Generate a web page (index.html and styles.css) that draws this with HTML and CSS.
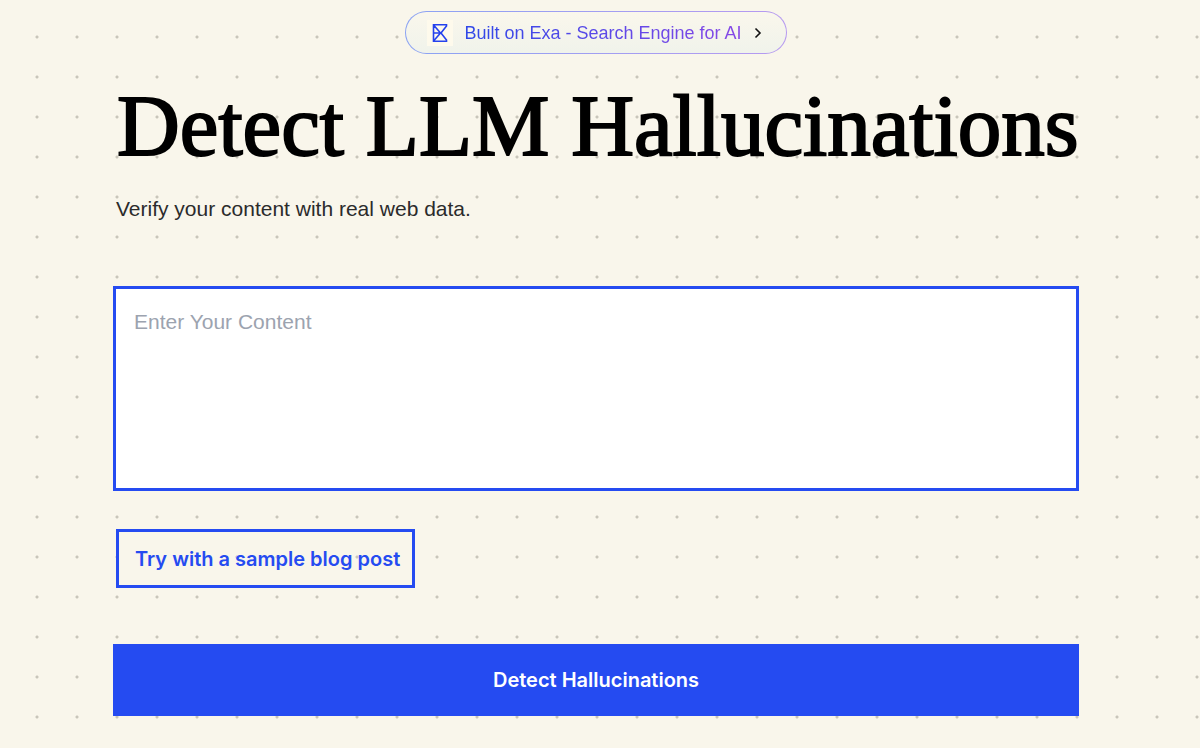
FILE: index.html
```html
<!DOCTYPE html>
<html lang="en">
<head>
<meta charset="utf-8">
<meta name="viewport" content="width=device-width, initial-scale=1">
<title>Detect LLM Hallucinations</title>
<link rel="stylesheet" href="styles.css">
</head>
<body>
<main class="page">
  <a class="badge" href="#">
    <svg class="badge-logo" viewBox="0 0 26 26" aria-hidden="true">
      <rect width="26" height="26" fill="#fefaec"/>
      <path d="M6.500 4.800H19.500V6L14 13L19.500 20V21.200H6.500zM7 5.500L13.500 13L7 20.500M6.500 13H13.500" fill="none" stroke="#2542ee" stroke-width="1.600"/>
    </svg>
    <span class="badge-text">Built on Exa - Search Engine for AI</span>
    <svg class="badge-arrow" viewBox="0 0 8 12" aria-hidden="true">
      <path d="M1.500 1.500L6 6L1.500 10.500" fill="none" stroke="#111" stroke-width="1.600"/>
    </svg>
  </a>
  <h1 class="title">Detect LLM Hallucinations</h1>
  <p class="subtitle">Verify your content with real web data.</p>
  <form class="form">
    <textarea class="content" aria-label="Your content" placeholder="Enter Your Content"></textarea>
    <button class="sample" type="button">Try with a sample blog post</button>
    <button class="submit" type="button">Detect Hallucinations</button>
  </form>
</main>
</body>
</html>
```
FILE: styles.css
```css
* {
  box-sizing: border-box;
}

body {
  margin: 0;
  min-height: 100vh;
  background-color: #f9f6eb;
  background-image: radial-gradient(circle at 50% 50%, #c9c6bb 1px, transparent 2px);
  background-size: 40px 40px;
  background-position: 17px 17px;
  font-family: "Liberation Sans", sans-serif;
  color: #2b2b2b;
}

.page {
  display: flex;
  flex-direction: column;
  max-width: 966px;
  margin: 0 121px 0 113px;
  padding: 11px 0 32px;
}

.badge {
  display: flex;
  align-items: center;
  align-self: center;
  height: 43px;
  padding: 0 24px 0 21px;
  border: 1px solid transparent;
  border-radius: 22px;
  background:
    linear-gradient(#faf7ec, #f0f3eb) padding-box,
    linear-gradient(90deg, #8ba3f3, #b79af0) border-box;
  text-decoration: none;
}

.badge-logo {
  width: 26px;
  height: 26px;
  margin-right: 11px;
}

.badge-text {
  font-size: 18px;
  line-height: 24px;
  color: transparent;
  background: linear-gradient(90deg, #2f48e8, #8648e6);
  background-clip: text;
  -webkit-background-clip: text;
}

.badge-arrow {
  width: 8px;
  height: 12px;
  margin-left: 12px;
}

.title {
  margin: 24px 0 0 4px;
  font-family: "Liberation Serif", serif;
  font-size: 87px;
  line-height: 96px;
  font-weight: 400;
  color: #000;
  white-space: nowrap;
  -webkit-text-stroke: 2px #000;
}

.subtitle {
  margin: 21px 0 0 3px;
  font-size: 21px;
  line-height: 28px;
}

.form {
  display: flex;
  flex-direction: column;
  margin-top: 63px;
}

.content {
  height: 205px;
  padding: 19px 18px;
  border: 3px solid #254bf1;
  border-radius: 0;
  background: #fff;
  font: 21px/28px "Liberation Sans", sans-serif;
  resize: none;
  outline: none;
}

.content::placeholder {
  color: #9ca3af;
}

.sample,
.submit {
  font: 600 20px/28px Inter, "Liberation Sans", sans-serif;
  cursor: pointer;
}

.sample {
  align-self: flex-start;
  margin: 38px 0 0 3px;
  padding: 12px 12px 12px 16px;
  height: 59px;
  border: 3px solid #254bf1;
  background: transparent;
  color: #254bf1;
}

.submit {
  height: 72px;
  margin-top: 56px;
  border: 0;
  background: #254bf1;
  color: #fff;
}
```
